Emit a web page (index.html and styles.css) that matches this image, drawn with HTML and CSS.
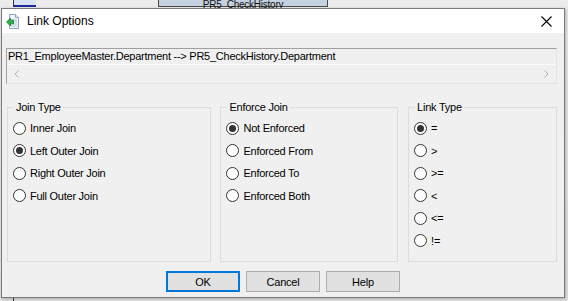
FILE: index.html
```html
<!DOCTYPE html>
<html>
<head>
<meta charset="utf-8">
<link rel="stylesheet" href="styles.css">
</head>
<body>
<div class="desk">
  <div class="bg-table"><span>PR5_CheckHistory</span></div>
  <div class="bg-blue"></div>
  <div class="bg-line"></div>

  <div class="dialog">
    <div class="titlebar">
      <svg class="appicon" width="14" height="15" viewBox="0 0 14 15">
        <path d="M3.5 0.5h6l3 3v11h-9z" fill="#eef3f9" stroke="#8ea4c2"/>
        <path d="M9.5 0.5v3h3" fill="#dfe7f1" stroke="#8ea4c2"/>
        <path d="M5 6h6M5 8h6M5 10h6M5 12h6" stroke="#b9cade"/>
        <path d="M0.5 8l4-4v2.2h3v3.6h-3v2.2z" fill="#2fae4a" stroke="#1d7f33" stroke-width="0.8"/>
      </svg>
      <span class="title">Link Options</span>
      <svg class="close" width="11" height="11" viewBox="0 0 11 11">
        <path d="M0.5 0.5l10 10M10.5 0.5l-10 10" stroke="#000" stroke-width="1.1"/>
      </svg>
    </div>

    <div class="content">
      <div class="pathbox">
        <div class="pathtext">PR1_EmployeeMaster.Department --&gt; PR5_CheckHistory.Department</div>
        <div class="hscroll">
          <svg width="5" height="8" viewBox="0 0 5 8"><path d="M4.5 0.5l-3.5 3.5 3.5 3.5" fill="none" stroke="#b0b0b0" stroke-width="1"/></svg>
          <svg width="5" height="8" viewBox="0 0 5 8"><path d="M0.5 0.5l3.5 3.5-3.5 3.5" fill="none" stroke="#b0b0b0" stroke-width="1"/></svg>
        </div>
      </div>

      <div class="groups">
        <fieldset class="group g-join">
          <legend>Join Type</legend>
          <div class="opt"><span class="radio"></span>Inner Join</div>
          <div class="opt"><span class="radio on"></span>Left Outer Join</div>
          <div class="opt"><span class="radio"></span>Right Outer Join</div>
          <div class="opt"><span class="radio"></span>Full Outer Join</div>
        </fieldset>
        <fieldset class="group g-enforce">
          <legend>Enforce Join</legend>
          <div class="opt"><span class="radio on"></span>Not Enforced</div>
          <div class="opt"><span class="radio"></span>Enforced From</div>
          <div class="opt"><span class="radio"></span>Enforced To</div>
          <div class="opt"><span class="radio"></span>Enforced Both</div>
        </fieldset>
        <fieldset class="group g-link">
          <legend>Link Type</legend>
          <div class="opt"><span class="radio on"></span>=</div>
          <div class="opt"><span class="radio"></span>&gt;</div>
          <div class="opt"><span class="radio"></span>&gt;=</div>
          <div class="opt"><span class="radio"></span>&lt;</div>
          <div class="opt"><span class="radio"></span>&lt;=</div>
          <div class="opt"><span class="radio"></span>!=</div>
        </fieldset>
      </div>

      <div class="buttons">
        <button class="btn default">OK</button>
        <button class="btn">Cancel</button>
        <button class="btn">Help</button>
      </div>
    </div>
  </div>
</div>
</body>
</html>
```

FILE: styles.css
```css
html, body {
  margin: 0;
  padding: 0;
}
body {
  width: 568px;
  height: 301px;
  overflow: hidden;
  background: #e4e4e4;
  font-family: "Liberation Sans", Arial, sans-serif;
  font-size: 11px;
  letter-spacing: -0.25px;
  color: #000;
}
.desk {
  position: relative;
  width: 568px;
  height: 301px;
  overflow: hidden;
  background: linear-gradient(#ececec, #e2e2e2);
}
.bg-table {
  position: absolute;
  left: 158px;
  top: -10px;
  width: 170px;
  height: 17px;
  box-sizing: border-box;
  padding-top: 9px;
  background: #c5d1e0;
  border: 1px solid #4a4a4a;
  text-align: center;
  font-size: 10px;
  line-height: 9px;
  color: #111;
}
.bg-blue {
  position: absolute;
  left: 13px;
  top: -3px;
  width: 22px;
  height: 8px;
  background: #d9e2f2;
  border-left: 1px solid #333;
  border-bottom: 2px solid #1a2a9a;
}
.bg-line {
  position: absolute;
  left: 13px;
  top: 290px;
  width: 1px;
  height: 20px;
  background: #333;
}
.dialog {
  position: absolute;
  left: 1px;
  top: 8px;
  width: 564px;
  height: 290px;
  box-sizing: border-box;
  border: 1px solid #7a7a7a;
  background: #f0f0f0;
  box-shadow: 1px 1px 3px rgba(0,0,0,0.25);
  display: flex;
  flex-direction: column;
}
.titlebar {
  height: 24px;
  background: #fff;
  display: flex;
  align-items: center;
  padding-left: 4px;
  flex: none;
}
.appicon {
  flex: none;
}
.title {
  margin-left: 7px;
  font-size: 12px;
  letter-spacing: 0;
  color: #000;
  flex: 1;
}
.close {
  margin-right: 12px;
  flex: none;
}
.content {
  padding: 15px 7px 0 4px;
  display: flex;
  flex-direction: column;
}
.pathbox {
  height: 36px;
  box-sizing: border-box;
  border: 1px solid;
  border-color: #a0a0a0 #e3e3e3 #e3e3e3 #a0a0a0;
  background: #f0f0f0;
  display: flex;
  flex-direction: column;
}
.pathtext {
  height: 15px;
  line-height: 15px;
  padding-left: 1px;
  white-space: nowrap;
  font-size: 11px;
}
.hscroll {
  flex: 1;
  border-top: 1px solid #fbfbfb;
  display: flex;
  justify-content: space-between;
  align-items: center;
  padding: 0 7px 0 7px;
}
.groups {
  margin-top: 17px;
  margin-left: 1px;
  display: flex;
  gap: 9px;
}
.group {
  margin: 0;
  padding: 3px 0 0 5px;
  border: 1px solid #dcdcdc;
  height: 161px;
  box-sizing: border-box;
  min-width: 0;
}
.group legend {
  padding: 0 2px;
  margin-left: 1px;
  font-size: 11px;
  line-height: 13px;
}
.g-join { width: 206px; }
.g-enforce { width: 179px; }
.g-link { width: 150px; margin-left: 1px; }
.opt {
  height: 22.5px;
  display: flex;
  align-items: center;
  white-space: nowrap;
}
.radio {
  width: 13px;
  height: 13px;
  box-sizing: border-box;
  border: 1px solid #333;
  border-radius: 50%;
  background: #fff;
  margin-right: 4px;
  flex: none;
  display: flex;
  align-items: center;
  justify-content: center;
}
.radio.on::after {
  content: "";
  width: 7px;
  height: 7px;
  border-radius: 50%;
  background: #333;
}
.buttons {
  margin-top: 9px;
  display: flex;
  justify-content: center;
  gap: 6px;
  padding-left: 3px;
}
.btn {
  width: 74px;
  height: 21px;
  box-sizing: border-box;
  background: #e1e1e1;
  border: 1px solid #adadad;
  font-family: "Liberation Sans", Arial, sans-serif;
  font-size: 11px;
  letter-spacing: -0.2px;
  color: #000;
  padding: 0;
}
.btn.default {
  border: 2px solid #0078d7;
}
```
